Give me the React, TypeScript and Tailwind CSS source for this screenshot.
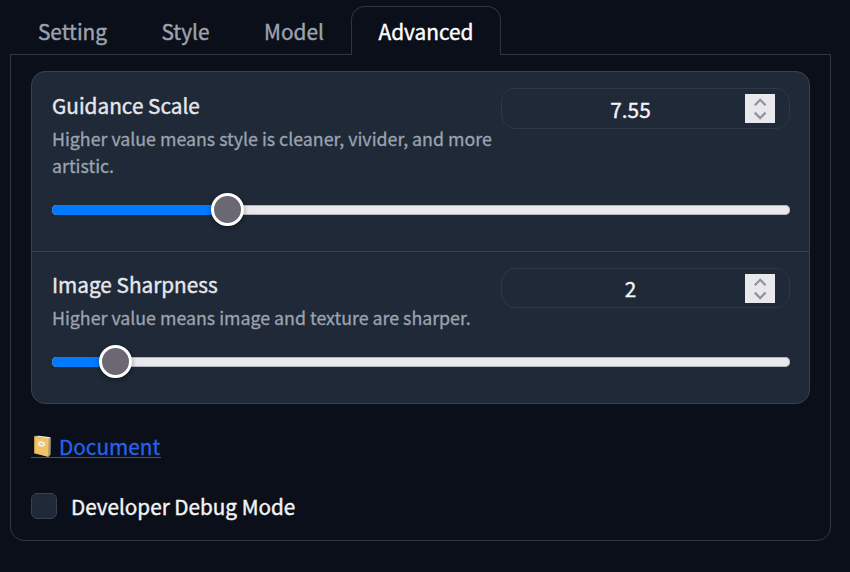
import { useState } from "react";
import { clsx } from "clsx";

interface SliderFieldProps {
  label: string;
  info: string;
  min: number;
  max: number;
  value: number;
  className?: string;
  labelClassName?: string;
  inputClassName?: string;
}

const THUMB = 33;

const tabs = [
  { name: "Setting", width: "w-[123px]" },
  { name: "Style", width: "w-[103px]" },
  { name: "Model", width: "w-[114px]" },
  { name: "Advanced", width: "w-[150px]" },
];

const Stepper = () => (
  <svg viewBox="0 0 30 29" className="h-[29px] w-[30px] shrink-0" fill="none">
    <rect width="30" height="29" fill="#e9e8ed" />
    <path d="M9.8 11.2 15.2 5.8l5.4 5.4M9.8 18.6l5.4 5.4 5.4-5.4" stroke="#9492a0" strokeWidth="2.3" />
  </svg>
);

const NotebookIcon = () => (
  <svg viewBox="0 0 22 24" className="mr-[6px] mt-[3px] h-[24px] w-[22px]">
    <path d="M3.4 2.1 19.6 3.9 19.2 20.5 17.4 23 3 19.2z" fill="#9b7d46" />
    <path d="M3.4 2 8 1.8 19.7 3.3 17.6 5z" fill="#eeeae2" />
    <path d="M17.6 4.8 19.7 3.4 19.5 20.8 17.4 22.8z" fill="#a59b91" />
    <path d="M3.1 2.3 17.7 4.7 17.3 22.8 3 19.1z" fill="#f0c466" />
    <path d="M3.1 2.3 4.2 2.5 4.1 19.4 3 19.1z" fill="#c69742" />
    <ellipse cx="10.5" cy="10" rx="3.6" ry="2.6" transform="rotate(10 10.5 10)" fill="#f3efe2" />
    <path d="m8.8 9.5 3.4 1" stroke="#a9a8a0" strokeWidth=".8" />
  </svg>
);

const SliderField = ({
  label,
  info,
  min,
  max,
  value,
  className,
  labelClassName,
  inputClassName,
}: SliderFieldProps) => {
  const ratio = (value - min) / (max - min);
  const left = `calc((100% - ${THUMB}px) * ${ratio})`;

  return (
    <div className={clsx("flex flex-col pl-5 pr-[19px]", className)}>
      <div className="flex justify-between">
        <div className={clsx("w-[448px] whitespace-nowrap", labelClassName)}>
          <div className="h-[32px] text-[20.75px] leading-[32px] text-[#e5e7eb] [-webkit-text-stroke:0.4px]">
            {label}
          </div>
          <p className="mt-[4px] whitespace-pre-line text-[17.8px] leading-[27px] text-[#9ca3af] [-webkit-text-stroke:0.3px]">
            {info}
          </p>
        </div>
        <div
          className={clsx(
            "flex w-[289px] shrink-0 items-center rounded-[14px] border border-[#2e3847] bg-[#1f2937] pr-[14px]",
            inputClassName
          )}
        >
          <span className="flex-1 pl-[14px] text-center text-[20.75px] leading-[32px] text-[#f3f4f6] [-webkit-text-stroke:0.4px]">
            {value}
          </span>
          <Stepper />
        </div>
      </div>
      <div className="relative mt-auto flex h-[33px] items-center">
        <div className="h-[10px] w-full overflow-hidden rounded-full bg-[#e9e8ed] shadow-[inset_0_0_0_1px_#b4b4bc]">
          <div className="h-full bg-[#007aff]" style={{ width: `calc(${left} + ${THUMB / 2}px)` }} />
        </div>
        <div
          className="absolute top-0 size-[33px] rounded-full border-[3px] border-white bg-[#6b6873] shadow-[0_2px_5px_rgba(0,0,0,0.4)]"
          style={{ left }}
        />
      </div>
    </div>
  );
};

export default function App() {
  const [active, setActive] = useState("Advanced");

  return (
    <div className="h-[572px] w-[850px] overflow-hidden bg-[#0b0f19] pl-[10px] pt-[6px] font-['Noto_Sans_CJK_SC',sans-serif]">
      <div className="flex h-[48px] pl-px">
        {tabs.map((tab) => (
          <button
            key={tab.name}
            onClick={() => setActive(tab.name)}
            className={clsx(
              "h-[49px] shrink-0 rounded-t-[14px] border border-b-0 pb-[2px] pt-[2px] text-center text-[20.8px] leading-[44px] [-webkit-text-stroke:0.4px]",
              tab.width,
              active === tab.name
                ? "relative z-10 border-[#2b3444] bg-[#0b0f19] text-white"
                : "border-transparent text-[#9ca3af]"
            )}
          >
            {tab.name}
          </button>
        ))}
      </div>

      <div className="flex h-[487px] w-[821px] flex-col rounded-b-[14px] border border-[#2f3846] px-5 pt-4">
        <div className="h-[333px] w-[779px] overflow-hidden rounded-[14px] border border-[#374151] bg-[#1f2937]">
          <SliderField
            label="Guidance Scale"
            info={"Higher value means style is cleaner, vivider, and more\nartistic."}
            min={1}
            max={30}
            value={7.55}
            className="h-[180px] border-b border-[#374151] pb-[25px] pt-4"
            labelClassName="pt-px"
            inputClassName="h-[41px]"
          />
          <SliderField
            label="Image Sharpness"
            info="Higher value means image and texture are sharper."
            min={0}
            max={30}
            value={2}
            className="h-[151px] pb-[25px] pt-4"
            inputClassName="h-[40px]"
          />
        </div>

        <a
          href="#"
          className="mt-[28px] flex h-[26px] w-[130px] items-center border-b border-[#2453bd] text-[20.75px] leading-[28px] text-[#2563eb] [-webkit-text-stroke:0.3px]"
        >
          <NotebookIcon />
          <span className="pt-[3px]">Document</span>
        </a>

        <label className="mt-[35px] flex items-center gap-[14px] text-[20.7px] leading-[26px] text-[#f3f4f6] [-webkit-text-stroke:0.4px]">
          <input
            type="checkbox"
            className="size-[26px] appearance-none rounded-[6px] border border-[#374151] bg-[#1f2937]"
          />
          Developer Debug Mode
        </label>
      </div>
    </div>
  );
}
